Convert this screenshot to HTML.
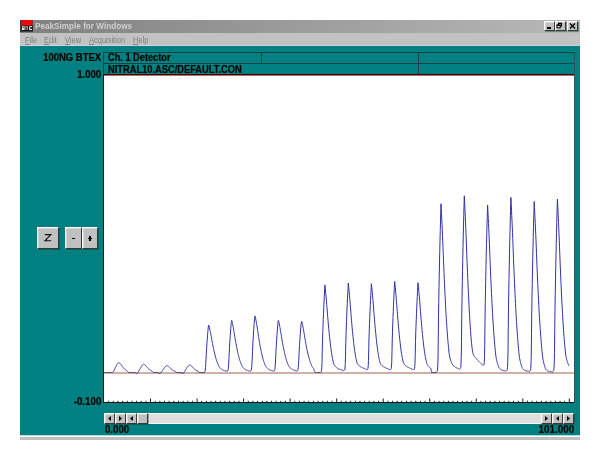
<!DOCTYPE html>
<html><head><meta charset="utf-8">
<style>
html,body{margin:0;padding:0;}
body{width:600px;height:460px;background:#fff;position:relative;overflow:hidden;font-family:"Liberation Sans",sans-serif;}
.abs{position:absolute;}
.t{position:absolute;-webkit-text-stroke:0.2px currentColor;font-weight:bold;font-size:10px;line-height:10px;color:#000;white-space:nowrap;}
.btn{position:absolute;background:#c0c0c0;box-sizing:border-box;border-top:1px solid #fff;border-left:1px solid #fff;border-bottom:1px solid #383838;border-right:1px solid #383838;box-shadow:1px 1px 0 rgba(0,40,40,0.35), inset 1px 1px 0 rgba(255,255,255,0.35);}
.m{position:absolute;top:35px;font-size:9px;line-height:10px;color:#808080;white-space:nowrap;transform:scaleX(0.83);transform-origin:0 0;}
.m u{text-decoration:underline;}
</style></head><body>
<!-- window -->
<div class="abs" style="left:20px;top:20px;width:560px;height:13px;background:linear-gradient(90deg,#808080 0%,#b8b8b8 100%);"></div>
<div class="abs" style="left:20px;top:33px;width:560px;height:13px;background:#c2c2c2;"></div>
<div class="abs" style="left:20px;top:45px;width:560px;height:1px;background:#c8d8d8;"></div>
<div class="abs" style="left:20px;top:46px;width:560px;height:389px;background:#008080;"></div>
<div class="abs" style="left:20px;top:435px;width:560px;height:1px;background:#b0dcdc;"></div>
<div class="abs" style="left:20px;top:437px;width:560px;height:3px;background:#c0c0c0;"></div>
<!-- icon -->
<svg class="abs" style="left:20px;top:20px;" width="13" height="13" viewBox="0 0 13 13">
<rect x="0" y="0" width="13" height="12" fill="#404040"/>
<rect x="1.3" y="0" width="11.2" height="5.6" fill="#f00808"/>
<rect x="1.3" y="5.6" width="11.4" height="5.4" fill="#181818"/>
<rect x="2" y="6.2" width="2.6" height="3.8" fill="#e8e8e8"/>
<rect x="5.4" y="6.2" width="2.6" height="3.8" fill="#b0b0b0"/>
<rect x="9.2" y="6.2" width="2.8" height="3.8" fill="#f0f0f0"/>
<rect x="10.2" y="7.2" width="1.8" height="1.8" fill="#181818"/>
<rect x="2.8" y="7" width="1" height="1" fill="#181818"/>
<rect x="6" y="7.4" width="1.2" height="2.6" fill="#303030"/>
</svg>
<div class="t" style="left:35px;top:21.3px;-webkit-text-stroke:0;color:#d0d0d0;font-size:9.5px;transform:scaleX(0.86);transform-origin:0 0;">PeakSimple for Windows</div>
<!-- title buttons -->
<div class="btn" style="left:544px;top:21px;width:11px;height:10px;"></div>
<div class="btn" style="left:555px;top:21px;width:11px;height:10px;"></div>
<div class="btn" style="left:567px;top:21px;width:11px;height:10px;"></div>
<div class="abs" style="left:547px;top:27px;width:4px;height:2px;background:#000;"></div>
<svg class="abs" style="left:555px;top:21px;" width="11" height="10" viewBox="0 0 11 10"><rect x="3.5" y="2.5" width="3" height="2.5" fill="none" stroke="#000" stroke-width="1"/><rect x="3" y="1.7" width="4" height="1" fill="#000"/><rect x="2" y="4.2" width="3.2" height="2.6" fill="#e8e8e8" stroke="#000" stroke-width="1"/><rect x="1.5" y="3.6" width="4.2" height="1" fill="#000"/></svg>
<svg class="abs" style="left:567px;top:21px;" width="11" height="10" viewBox="0 0 11 10"><path d="M3 2.5 L8 7.5 M8 2.5 L3 7.5" stroke="#000" stroke-width="1.3" fill="none"/></svg>
<!-- menu -->
<div class="m" style="left:25px;"><u>F</u>ile</div>
<div class="m" style="left:44px;"><u>E</u>dit</div>
<div class="m" style="left:65px;"><u>V</u>iew</div>
<div class="m" style="left:89px;"><u>A</u>cquisition</div>
<div class="m" style="left:133px;"><u>H</u>elp</div>
<!-- header box -->
<div class="abs" style="left:103px;top:52px;width:472px;height:23px;box-sizing:border-box;border:1px solid #104444;border-bottom:1px solid #400000;"></div>
<div class="abs" style="left:104px;top:63px;width:470px;height:1px;background:#104444;"></div>
<div class="abs" style="left:261px;top:53px;width:1px;height:10px;background:#104444;"></div>
<div class="abs" style="left:418px;top:53px;width:1px;height:21px;background:#104444;"></div>
<div class="t" style="left:107.5px;top:52.87px;transform:scaleX(0.922);transform-origin:0 0;">Ch. 1 Detector</div>
<div class="t" style="left:107.5px;top:64.9px;transform:scaleX(0.930);transform-origin:0 0;">NITRAL10.ASC/DEFAULT.CON</div>
<div class="t" style="right:498.7px;top:52.97px;transform:scaleX(0.948);transform-origin:100% 0;">100NG BTEX</div>
<div class="t" style="right:499px;top:70.0px;transform:scaleX(0.950);transform-origin:100% 0;">1.000</div>
<div class="t" style="right:499px;top:396.87px;transform:scaleX(0.977);transform-origin:100% 0;">-0.100</div>
<div class="t" style="left:104.7px;top:425.07px;transform:scaleX(0.966);transform-origin:0 0;">0.000</div>
<div class="t" style="right:26.2px;top:424.87px;transform:scaleX(0.984);transform-origin:100% 0;">101.000</div>
<!-- chart -->
<div class="abs" style="left:574px;top:53px;width:1px;height:350px;background:#285858;"></div>
<div class="abs" style="left:103px;top:75px;width:1px;height:328px;background:#002020;"></div>
<div class="abs" style="left:104px;top:75px;width:470px;height:327px;background:#fff;"></div>
<div class="abs" style="left:103px;top:402px;width:471px;height:1px;background:#201010;"></div>
<svg class="abs" style="left:104px;top:75px;" width="470" height="328" viewBox="0 0 470 328">
<line x1="4.65" y1="325.80" x2="4.65" y2="327" stroke="#381010" stroke-width="1"/><line x1="9.31" y1="325.80" x2="9.31" y2="327" stroke="#381010" stroke-width="1"/><line x1="13.96" y1="325.80" x2="13.96" y2="327" stroke="#381010" stroke-width="1"/><line x1="18.61" y1="325.80" x2="18.61" y2="327" stroke="#381010" stroke-width="1"/><line x1="23.27" y1="325.80" x2="23.27" y2="327" stroke="#381010" stroke-width="1"/><line x1="27.92" y1="325.80" x2="27.92" y2="327" stroke="#381010" stroke-width="1"/><line x1="32.57" y1="325.80" x2="32.57" y2="327" stroke="#381010" stroke-width="1"/><line x1="37.23" y1="325.80" x2="37.23" y2="327" stroke="#381010" stroke-width="1"/><line x1="41.88" y1="325.80" x2="41.88" y2="327" stroke="#381010" stroke-width="1"/><line x1="46.53" y1="323.50" x2="46.53" y2="327" stroke="#381010" stroke-width="1"/><line x1="51.19" y1="325.80" x2="51.19" y2="327" stroke="#381010" stroke-width="1"/><line x1="55.84" y1="325.80" x2="55.84" y2="327" stroke="#381010" stroke-width="1"/><line x1="60.50" y1="325.80" x2="60.50" y2="327" stroke="#381010" stroke-width="1"/><line x1="65.15" y1="325.80" x2="65.15" y2="327" stroke="#381010" stroke-width="1"/><line x1="69.80" y1="325.80" x2="69.80" y2="327" stroke="#381010" stroke-width="1"/><line x1="74.46" y1="325.80" x2="74.46" y2="327" stroke="#381010" stroke-width="1"/><line x1="79.11" y1="325.80" x2="79.11" y2="327" stroke="#381010" stroke-width="1"/><line x1="83.76" y1="325.80" x2="83.76" y2="327" stroke="#381010" stroke-width="1"/><line x1="88.42" y1="325.80" x2="88.42" y2="327" stroke="#381010" stroke-width="1"/><line x1="93.07" y1="323.50" x2="93.07" y2="327" stroke="#381010" stroke-width="1"/><line x1="97.72" y1="325.80" x2="97.72" y2="327" stroke="#381010" stroke-width="1"/><line x1="102.38" y1="325.80" x2="102.38" y2="327" stroke="#381010" stroke-width="1"/><line x1="107.03" y1="325.80" x2="107.03" y2="327" stroke="#381010" stroke-width="1"/><line x1="111.68" y1="325.80" x2="111.68" y2="327" stroke="#381010" stroke-width="1"/><line x1="116.34" y1="325.80" x2="116.34" y2="327" stroke="#381010" stroke-width="1"/><line x1="120.99" y1="325.80" x2="120.99" y2="327" stroke="#381010" stroke-width="1"/><line x1="125.64" y1="325.80" x2="125.64" y2="327" stroke="#381010" stroke-width="1"/><line x1="130.30" y1="325.80" x2="130.30" y2="327" stroke="#381010" stroke-width="1"/><line x1="134.95" y1="325.80" x2="134.95" y2="327" stroke="#381010" stroke-width="1"/><line x1="139.60" y1="323.50" x2="139.60" y2="327" stroke="#381010" stroke-width="1"/><line x1="144.26" y1="325.80" x2="144.26" y2="327" stroke="#381010" stroke-width="1"/><line x1="148.91" y1="325.80" x2="148.91" y2="327" stroke="#381010" stroke-width="1"/><line x1="153.57" y1="325.80" x2="153.57" y2="327" stroke="#381010" stroke-width="1"/><line x1="158.22" y1="325.80" x2="158.22" y2="327" stroke="#381010" stroke-width="1"/><line x1="162.87" y1="325.80" x2="162.87" y2="327" stroke="#381010" stroke-width="1"/><line x1="167.53" y1="325.80" x2="167.53" y2="327" stroke="#381010" stroke-width="1"/><line x1="172.18" y1="325.80" x2="172.18" y2="327" stroke="#381010" stroke-width="1"/><line x1="176.83" y1="325.80" x2="176.83" y2="327" stroke="#381010" stroke-width="1"/><line x1="181.49" y1="325.80" x2="181.49" y2="327" stroke="#381010" stroke-width="1"/><line x1="186.14" y1="323.50" x2="186.14" y2="327" stroke="#381010" stroke-width="1"/><line x1="190.79" y1="325.80" x2="190.79" y2="327" stroke="#381010" stroke-width="1"/><line x1="195.45" y1="325.80" x2="195.45" y2="327" stroke="#381010" stroke-width="1"/><line x1="200.10" y1="325.80" x2="200.10" y2="327" stroke="#381010" stroke-width="1"/><line x1="204.75" y1="325.80" x2="204.75" y2="327" stroke="#381010" stroke-width="1"/><line x1="209.41" y1="325.80" x2="209.41" y2="327" stroke="#381010" stroke-width="1"/><line x1="214.06" y1="325.80" x2="214.06" y2="327" stroke="#381010" stroke-width="1"/><line x1="218.71" y1="325.80" x2="218.71" y2="327" stroke="#381010" stroke-width="1"/><line x1="223.37" y1="325.80" x2="223.37" y2="327" stroke="#381010" stroke-width="1"/><line x1="228.02" y1="325.80" x2="228.02" y2="327" stroke="#381010" stroke-width="1"/><line x1="232.68" y1="323.50" x2="232.68" y2="327" stroke="#381010" stroke-width="1"/><line x1="237.33" y1="325.80" x2="237.33" y2="327" stroke="#381010" stroke-width="1"/><line x1="241.98" y1="325.80" x2="241.98" y2="327" stroke="#381010" stroke-width="1"/><line x1="246.64" y1="325.80" x2="246.64" y2="327" stroke="#381010" stroke-width="1"/><line x1="251.29" y1="325.80" x2="251.29" y2="327" stroke="#381010" stroke-width="1"/><line x1="255.94" y1="325.80" x2="255.94" y2="327" stroke="#381010" stroke-width="1"/><line x1="260.60" y1="325.80" x2="260.60" y2="327" stroke="#381010" stroke-width="1"/><line x1="265.25" y1="325.80" x2="265.25" y2="327" stroke="#381010" stroke-width="1"/><line x1="269.90" y1="325.80" x2="269.90" y2="327" stroke="#381010" stroke-width="1"/><line x1="274.56" y1="325.80" x2="274.56" y2="327" stroke="#381010" stroke-width="1"/><line x1="279.21" y1="323.50" x2="279.21" y2="327" stroke="#381010" stroke-width="1"/><line x1="283.86" y1="325.80" x2="283.86" y2="327" stroke="#381010" stroke-width="1"/><line x1="288.52" y1="325.80" x2="288.52" y2="327" stroke="#381010" stroke-width="1"/><line x1="293.17" y1="325.80" x2="293.17" y2="327" stroke="#381010" stroke-width="1"/><line x1="297.82" y1="325.80" x2="297.82" y2="327" stroke="#381010" stroke-width="1"/><line x1="302.48" y1="325.80" x2="302.48" y2="327" stroke="#381010" stroke-width="1"/><line x1="307.13" y1="325.80" x2="307.13" y2="327" stroke="#381010" stroke-width="1"/><line x1="311.78" y1="325.80" x2="311.78" y2="327" stroke="#381010" stroke-width="1"/><line x1="316.44" y1="325.80" x2="316.44" y2="327" stroke="#381010" stroke-width="1"/><line x1="321.09" y1="325.80" x2="321.09" y2="327" stroke="#381010" stroke-width="1"/><line x1="325.75" y1="323.50" x2="325.75" y2="327" stroke="#381010" stroke-width="1"/><line x1="330.40" y1="325.80" x2="330.40" y2="327" stroke="#381010" stroke-width="1"/><line x1="335.05" y1="325.80" x2="335.05" y2="327" stroke="#381010" stroke-width="1"/><line x1="339.71" y1="325.80" x2="339.71" y2="327" stroke="#381010" stroke-width="1"/><line x1="344.36" y1="325.80" x2="344.36" y2="327" stroke="#381010" stroke-width="1"/><line x1="349.01" y1="325.80" x2="349.01" y2="327" stroke="#381010" stroke-width="1"/><line x1="353.67" y1="325.80" x2="353.67" y2="327" stroke="#381010" stroke-width="1"/><line x1="358.32" y1="325.80" x2="358.32" y2="327" stroke="#381010" stroke-width="1"/><line x1="362.97" y1="325.80" x2="362.97" y2="327" stroke="#381010" stroke-width="1"/><line x1="367.63" y1="325.80" x2="367.63" y2="327" stroke="#381010" stroke-width="1"/><line x1="372.28" y1="323.50" x2="372.28" y2="327" stroke="#381010" stroke-width="1"/><line x1="376.93" y1="325.80" x2="376.93" y2="327" stroke="#381010" stroke-width="1"/><line x1="381.59" y1="325.80" x2="381.59" y2="327" stroke="#381010" stroke-width="1"/><line x1="386.24" y1="325.80" x2="386.24" y2="327" stroke="#381010" stroke-width="1"/><line x1="390.89" y1="325.80" x2="390.89" y2="327" stroke="#381010" stroke-width="1"/><line x1="395.55" y1="325.80" x2="395.55" y2="327" stroke="#381010" stroke-width="1"/><line x1="400.20" y1="325.80" x2="400.20" y2="327" stroke="#381010" stroke-width="1"/><line x1="404.85" y1="325.80" x2="404.85" y2="327" stroke="#381010" stroke-width="1"/><line x1="409.51" y1="325.80" x2="409.51" y2="327" stroke="#381010" stroke-width="1"/><line x1="414.16" y1="325.80" x2="414.16" y2="327" stroke="#381010" stroke-width="1"/><line x1="418.82" y1="323.50" x2="418.82" y2="327" stroke="#381010" stroke-width="1"/><line x1="423.47" y1="325.80" x2="423.47" y2="327" stroke="#381010" stroke-width="1"/><line x1="428.12" y1="325.80" x2="428.12" y2="327" stroke="#381010" stroke-width="1"/><line x1="432.78" y1="325.80" x2="432.78" y2="327" stroke="#381010" stroke-width="1"/><line x1="437.43" y1="325.80" x2="437.43" y2="327" stroke="#381010" stroke-width="1"/><line x1="442.08" y1="325.80" x2="442.08" y2="327" stroke="#381010" stroke-width="1"/><line x1="446.74" y1="325.80" x2="446.74" y2="327" stroke="#381010" stroke-width="1"/><line x1="451.39" y1="325.80" x2="451.39" y2="327" stroke="#381010" stroke-width="1"/><line x1="456.04" y1="325.80" x2="456.04" y2="327" stroke="#381010" stroke-width="1"/><line x1="460.70" y1="325.80" x2="460.70" y2="327" stroke="#381010" stroke-width="1"/><line x1="465.35" y1="323.50" x2="465.35" y2="327" stroke="#381010" stroke-width="1"/>
<line x1="0" y1="0.5" x2="470" y2="0.5" stroke="#b07070" stroke-width="1"/>
<rect x="0" y="297.2" width="470" height="1.6" fill="#c89c94"/>
<path d="M0.50 297.50 L0.75 297.50 L1.00 297.50 L1.25 297.50 L1.50 297.50 L1.75 297.50 L2.00 297.50 L2.25 297.50 L2.50 297.50 L2.75 297.50 L3.00 297.50 L3.25 297.50 L3.50 297.50 L3.75 297.50 L4.00 297.50 L4.25 297.50 L4.50 297.50 L4.75 297.50 L5.00 297.50 L5.25 297.50 L5.50 297.50 L5.75 297.50 L6.00 297.50 L6.25 297.50 L6.50 297.50 L6.75 297.50 L7.00 297.50 L7.25 297.50 L7.50 297.50 L7.75 297.50 L8.00 297.50 L8.25 297.50 L8.50 297.45 L8.75 297.30 L9.00 297.10 L9.25 296.85 L9.50 296.50 L9.75 296.08 L10.00 295.59 L10.25 295.06 L10.50 294.51 L10.75 293.95 L11.00 293.40 L11.25 292.89 L11.50 292.41 L11.75 291.92 L12.00 291.40 L12.25 290.88 L12.50 290.37 L12.75 289.88 L13.00 289.43 L13.25 289.03 L13.50 288.69 L13.75 288.44 L14.00 288.21 L14.25 287.99 L14.50 287.82 L14.75 287.72 L14.90 287.70 L15.00 287.71 L15.25 287.80 L15.50 287.97 L15.75 288.18 L16.00 288.40 L16.25 288.62 L16.50 288.87 L16.75 289.17 L17.00 289.49 L17.25 289.84 L17.50 290.21 L17.75 290.58 L18.00 290.96 L18.25 291.33 L18.50 291.70 L18.75 292.04 L19.00 292.37 L19.25 292.66 L19.50 292.93 L19.75 293.20 L20.00 293.47 L20.25 293.72 L20.50 293.97 L20.75 294.20 L21.00 294.43 L21.25 294.64 L21.50 294.83 L21.75 295.00 L22.00 295.15 L22.25 295.29 L22.50 295.44 L22.75 295.62 L23.00 295.83 L23.25 296.11 L23.50 296.43 L23.75 296.74 L24.00 297.02 L24.25 297.22 L24.50 297.39 L24.75 297.50 L25.00 297.50 L25.25 297.50 L25.50 297.50 L25.75 297.50 L26.00 297.50 L26.25 297.50 L26.50 297.50 L26.75 297.50 L27.00 297.50 L27.25 297.50 L27.50 297.50 L27.75 297.50 L28.00 297.50 L28.25 297.50 L28.50 297.50 L28.75 297.50 L29.00 297.50 L29.25 297.50 L29.50 297.50 L29.75 297.50 L30.00 297.50 L30.25 297.50 L30.50 297.50 L30.75 297.62 L31.00 297.75 L31.25 297.88 L31.50 298.00 L31.75 298.12 L32.00 298.25 L32.25 298.38 L32.50 298.50 L32.75 298.38 L33.00 298.25 L33.25 298.12 L33.50 297.91 L33.75 297.64 L34.00 297.34 L34.25 296.97 L34.50 296.52 L34.75 296.14 L35.00 295.71 L35.25 295.25 L35.50 294.78 L35.75 294.31 L36.00 293.85 L36.25 293.43 L36.50 293.03 L36.75 292.60 L37.00 292.16 L37.25 291.72 L37.50 291.29 L37.75 290.89 L38.00 290.52 L38.25 290.21 L38.50 289.95 L38.75 289.75 L39.00 289.55 L39.25 289.39 L39.50 289.26 L39.75 289.20 L39.80 289.20 L40.00 289.23 L40.25 289.34 L40.50 289.49 L40.75 289.68 L41.00 289.86 L41.25 290.06 L41.50 290.29 L41.75 290.55 L42.00 290.84 L42.25 291.14 L42.50 291.45 L42.75 291.77 L43.00 292.09 L43.25 292.40 L43.50 292.71 L43.75 292.99 L44.00 293.25 L44.25 293.49 L44.50 293.72 L44.75 293.95 L45.00 294.17 L45.25 294.39 L45.50 294.59 L45.75 294.79 L46.00 294.97 L46.25 295.14 L46.50 295.30 L46.75 295.43 L47.00 295.56 L47.25 295.68 L47.50 295.81 L47.75 295.97 L48.00 296.17 L48.25 296.43 L48.50 296.70 L48.75 296.96 L49.00 297.17 L49.25 297.33 L49.50 297.46 L49.75 297.50 L50.00 297.50 L50.25 297.50 L50.50 297.50 L50.75 297.50 L51.00 297.50 L51.25 297.50 L51.50 297.50 L51.75 297.50 L52.00 297.50 L52.25 297.50 L52.50 297.50 L52.75 297.50 L53.00 297.50 L53.25 297.50 L53.50 297.50 L53.75 297.62 L54.00 297.75 L54.25 297.88 L54.50 298.00 L54.75 298.12 L55.00 298.25 L55.25 298.38 L55.50 298.50 L55.75 298.38 L56.00 298.25 L56.25 298.12 L56.50 298.00 L56.75 297.78 L57.00 297.53 L57.25 297.25 L57.50 296.90 L57.75 296.63 L58.00 296.30 L58.25 295.94 L58.50 295.55 L58.75 295.16 L59.00 294.77 L59.25 294.39 L59.50 294.05 L59.75 293.71 L60.00 293.35 L60.25 292.99 L60.50 292.62 L60.75 292.27 L61.00 291.94 L61.25 291.64 L61.50 291.39 L61.75 291.19 L62.00 291.02 L62.25 290.86 L62.50 290.73 L62.75 290.64 L63.00 290.60 L63.25 290.64 L63.50 290.74 L63.75 290.87 L64.00 291.03 L64.25 291.18 L64.50 291.35 L64.75 291.55 L65.00 291.77 L65.25 292.01 L65.50 292.26 L65.75 292.52 L66.00 292.79 L66.25 293.05 L66.50 293.31 L66.75 293.56 L67.00 293.80 L67.25 294.01 L67.50 294.21 L67.75 294.40 L68.00 294.59 L68.25 294.77 L68.50 294.95 L68.75 295.11 L69.00 295.27 L69.25 295.43 L69.50 295.57 L69.75 295.69 L70.00 295.80 L70.25 295.90 L70.50 296.01 L70.75 296.12 L71.00 296.26 L71.25 296.44 L71.50 296.65 L71.75 296.88 L72.00 297.09 L72.25 297.25 L72.50 297.38 L72.75 297.48 L73.00 297.50 L73.25 297.50 L73.50 297.50 L73.75 297.50 L74.00 297.50 L74.25 297.50 L74.50 297.50 L74.75 297.50 L75.00 297.50 L75.25 297.50 L75.50 297.50 L75.75 297.50 L76.00 297.50 L76.25 297.50 L76.50 297.50 L76.75 297.52 L77.00 297.65 L77.25 297.77 L77.50 297.90 L77.75 298.02 L78.00 298.15 L78.25 298.27 L78.50 298.40 L78.75 298.48 L79.00 298.35 L79.25 298.23 L79.50 298.02 L79.75 297.77 L80.00 297.48 L80.25 297.13 L80.50 296.71 L80.75 296.27 L81.00 295.88 L81.25 295.47 L81.50 295.04 L81.75 294.62 L82.00 294.20 L82.25 293.82 L82.50 293.46 L82.75 293.07 L83.00 292.68 L83.25 292.28 L83.50 291.89 L83.75 291.53 L84.00 291.20 L84.25 290.91 L84.50 290.68 L84.75 290.49 L85.00 290.32 L85.25 290.17 L85.50 290.05 L85.75 290.00 L85.80 290.00 L86.00 290.03 L86.25 290.12 L86.50 290.27 L86.75 290.43 L87.00 290.60 L87.25 290.78 L87.50 290.99 L87.75 291.22 L88.00 291.48 L88.25 291.75 L88.50 292.03 L88.75 292.32 L89.00 292.61 L89.25 292.89 L89.50 293.17 L89.75 293.43 L90.00 293.66 L90.25 293.88 L90.50 294.09 L90.75 294.29 L91.00 294.49 L91.25 294.69 L91.50 294.87 L91.75 295.05 L92.00 295.21 L92.25 295.37 L92.50 295.51 L92.75 295.63 L93.00 295.74 L93.25 295.86 L93.50 295.98 L93.75 296.12 L94.00 296.30 L94.25 296.53 L94.50 296.78 L94.75 297.01 L95.00 297.20 L95.25 297.34 L95.50 297.46 L95.75 297.50 L96.00 297.50 L96.25 297.50 L96.50 297.50 L96.75 297.50 L97.00 297.50 L97.25 297.50 L97.50 297.50 L97.75 297.50 L98.00 297.50 L98.25 297.50 L98.50 297.50 L98.75 297.50 L99.00 297.50 L99.25 297.50 L99.50 297.50 L99.75 297.50 L100.00 297.46 L100.25 297.37 L100.50 297.27 L100.75 297.03 L101.00 296.45 L101.25 295.17 L101.50 292.49 L101.75 288.81 L102.00 284.47 L102.25 279.74 L102.50 275.02 L102.75 271.04 L103.00 267.45 L103.25 264.07 L103.50 260.88 L103.75 257.86 L104.00 255.03 L104.25 252.13 L104.50 250.95 L104.60 250.17 L104.75 250.42 L105.00 250.53 L105.25 251.73 L105.50 252.88 L105.75 254.05 L106.00 255.23 L106.25 256.43 L106.50 257.68 L106.75 258.97 L107.00 260.30 L107.25 261.68 L107.50 263.09 L107.75 264.50 L108.00 265.89 L108.25 267.25 L108.50 268.57 L108.75 269.85 L109.00 271.10 L109.25 272.31 L109.50 273.50 L109.75 274.65 L110.00 275.78 L110.25 276.88 L110.50 277.96 L110.75 279.01 L111.00 280.02 L111.25 280.99 L111.50 281.91 L111.75 282.81 L112.00 283.67 L112.25 284.50 L112.50 285.31 L112.75 286.08 L113.00 286.82 L113.25 287.51 L113.50 288.17 L113.75 288.79 L114.00 289.39 L114.25 289.96 L114.50 290.50 L114.75 291.02 L115.00 291.50 L115.25 291.92 L115.50 292.29 L115.75 292.61 L116.00 292.88 L116.25 293.12 L116.50 293.34 L116.75 293.55 L117.00 293.77 L117.25 293.98 L117.50 294.19 L117.75 294.38 L118.00 294.56 L118.25 294.72 L118.50 294.86 L118.75 294.98 L119.00 295.09 L119.25 295.19 L119.50 295.28 L119.75 295.37 L120.00 295.45 L120.25 295.53 L120.50 295.60 L120.75 295.68 L121.00 295.75 L121.25 295.82 L121.50 295.89 L121.75 295.96 L122.00 296.02 L122.25 296.09 L122.50 296.14 L122.75 296.17 L123.00 296.17 L123.25 296.15 L123.50 296.08 L123.75 295.85 L124.00 295.26 L124.25 293.90 L124.50 291.03 L124.75 287.08 L125.00 282.40 L125.25 277.29 L125.50 272.20 L125.75 267.91 L126.00 264.05 L126.25 260.42 L126.50 256.98 L126.75 253.74 L127.00 250.70 L127.25 247.58 L127.50 246.32 L127.60 245.48 L127.75 245.78 L128.00 245.92 L128.25 247.26 L128.50 248.53 L128.75 249.82 L129.00 251.13 L129.25 252.47 L129.50 253.84 L129.75 255.27 L130.00 256.74 L130.25 258.26 L130.50 259.82 L130.75 261.38 L131.00 262.91 L131.25 264.41 L131.50 265.87 L131.75 267.28 L132.00 268.66 L132.25 269.99 L132.50 271.30 L132.75 272.57 L133.00 273.82 L133.25 275.03 L133.50 276.22 L133.75 277.37 L134.00 278.48 L134.25 279.55 L134.50 280.57 L134.75 281.54 L135.00 282.48 L135.25 283.39 L135.50 284.26 L135.75 285.10 L136.00 285.90 L136.25 286.65 L136.50 287.37 L136.75 288.04 L137.00 288.69 L137.25 289.31 L137.50 289.90 L137.75 290.46 L138.00 290.98 L138.25 291.44 L138.50 291.85 L138.75 292.19 L139.00 292.48 L139.25 292.74 L139.50 292.98 L139.75 293.22 L140.00 293.45 L140.25 293.68 L140.50 293.91 L140.75 294.11 L141.00 294.31 L141.25 294.48 L141.50 294.63 L141.75 294.76 L142.00 294.88 L142.25 294.99 L142.50 295.09 L142.75 295.19 L143.00 295.28 L143.25 295.36 L143.50 295.44 L143.75 295.52 L144.00 295.60 L144.25 295.67 L144.50 295.75 L144.75 295.82 L145.00 295.90 L145.25 295.97 L145.50 296.03 L145.75 296.08 L146.00 296.11 L146.25 296.12 L146.50 296.09 L146.75 296.02 L147.00 295.83 L147.25 295.28 L147.50 294.07 L147.75 291.28 L148.00 287.18 L148.25 282.22 L148.50 276.75 L148.75 271.11 L149.00 266.27 L149.25 262.01 L149.50 258.02 L149.75 254.24 L150.00 250.67 L150.25 247.32 L150.50 243.66 L150.75 242.13 L150.90 241.14 L151.00 241.39 L151.25 241.39 L151.50 242.66 L151.75 244.04 L152.00 245.44 L152.25 246.86 L152.50 248.30 L152.75 249.79 L153.00 251.32 L153.25 252.92 L153.50 254.56 L153.75 256.24 L154.00 257.94 L154.25 259.61 L154.50 261.25 L154.75 262.84 L155.00 264.39 L155.25 265.89 L155.50 267.35 L155.75 268.77 L156.00 270.16 L156.25 271.52 L156.50 272.85 L156.75 274.14 L157.00 275.40 L157.25 276.61 L157.50 277.78 L157.75 278.89 L158.00 279.96 L158.25 280.98 L158.50 281.97 L158.75 282.93 L159.00 283.85 L159.25 284.72 L159.50 285.55 L159.75 286.34 L160.00 287.08 L160.25 287.79 L160.50 288.47 L160.75 289.12 L161.00 289.74 L161.25 290.31 L161.50 290.82 L161.75 291.27 L162.00 291.66 L162.25 291.99 L162.50 292.27 L162.75 292.54 L163.00 292.79 L163.25 293.05 L163.50 293.30 L163.75 293.55 L164.00 293.78 L164.25 293.99 L164.50 294.18 L164.75 294.35 L165.00 294.50 L165.25 294.63 L165.50 294.75 L165.75 294.86 L166.00 294.97 L166.25 295.06 L166.50 295.16 L166.75 295.25 L167.00 295.33 L167.25 295.42 L167.50 295.50 L167.75 295.58 L168.00 295.66 L168.25 295.74 L168.50 295.82 L168.75 295.89 L169.00 295.95 L169.25 296.00 L169.50 296.02 L169.75 296.02 L170.00 295.99 L170.25 295.92 L170.50 295.64 L170.75 294.96 L171.00 293.33 L171.25 290.20 L171.50 286.08 L171.75 281.30 L172.00 276.15 L172.25 271.20 L172.50 267.06 L172.75 263.25 L173.00 259.67 L173.25 256.28 L173.50 253.09 L173.75 250.10 L174.00 247.23 L174.25 246.13 L174.30 245.37 L174.50 245.73 L174.75 246.00 L175.00 247.52 L175.25 248.80 L175.50 250.09 L175.75 251.41 L176.00 252.75 L176.25 254.14 L176.50 255.58 L176.75 257.07 L177.00 258.60 L177.25 260.16 L177.50 261.72 L177.75 263.25 L178.00 264.74 L178.25 266.19 L178.50 267.60 L178.75 268.97 L179.00 270.30 L179.25 271.60 L179.50 272.87 L179.75 274.11 L180.00 275.31 L180.25 276.49 L180.50 277.64 L180.75 278.73 L181.00 279.78 L181.25 280.79 L181.50 281.75 L181.75 282.68 L182.00 283.58 L182.25 284.44 L182.50 285.27 L182.75 286.06 L183.00 286.79 L183.25 287.49 L183.50 288.15 L183.75 288.78 L184.00 289.39 L184.25 289.96 L184.50 290.50 L184.75 290.99 L185.00 291.43 L185.25 291.81 L185.50 292.13 L185.75 292.40 L186.00 292.63 L186.25 292.86 L186.50 293.07 L186.75 293.28 L187.00 293.49 L187.25 293.69 L187.50 293.88 L187.75 294.05 L188.00 294.21 L188.25 294.35 L188.50 294.48 L188.75 294.60 L189.00 294.71 L189.25 294.81 L189.50 294.91 L189.75 295.00 L190.00 295.09 L190.25 295.18 L190.50 295.26 L190.75 295.35 L191.00 295.43 L191.25 295.52 L191.50 295.60 L191.75 295.69 L192.00 295.76 L192.25 295.83 L192.50 295.88 L192.75 295.91 L193.00 295.91 L193.25 295.87 L193.50 295.78 L193.75 295.44 L194.00 294.68 L194.25 292.77 L194.50 289.45 L194.75 285.22 L195.00 280.40 L195.25 275.25 L195.50 270.52 L195.75 266.52 L196.00 262.81 L196.25 259.31 L196.50 255.99 L196.75 252.88 L197.00 249.95 L197.25 247.94 L197.50 246.81 L197.75 246.50 L198.00 246.98 L198.25 248.24 L198.50 249.51 L198.75 250.80 L199.00 252.11 L199.25 253.45 L199.50 254.83 L199.75 256.27 L200.00 257.75 L200.25 259.28 L200.50 260.83 L200.75 262.37 L201.00 263.88 L201.25 265.35 L201.50 266.78 L201.75 268.16 L202.00 269.51 L202.25 270.83 L202.50 272.11 L202.75 273.36 L203.00 274.58 L203.25 275.77 L203.50 276.94 L203.75 278.06 L204.00 279.14 L204.25 280.17 L204.50 281.16 L204.75 282.11 L205.00 283.02 L205.25 283.90 L205.50 284.76 L205.75 285.58 L206.00 286.35 L206.25 287.09 L206.50 287.79 L206.75 288.47 L207.00 289.11 L207.25 289.73 L207.50 290.32 L207.75 290.88 L208.00 291.39 L208.25 291.84 L208.50 292.23 L208.75 292.57 L209.00 292.86 L209.25 293.13 L209.50 293.53 L209.75 294.09 L210.00 294.78 L210.25 295.58 L210.50 296.35 L210.75 296.92 L211.00 297.29 L211.25 297.47 L211.50 297.50 L211.75 297.50 L212.00 297.50 L212.25 297.50 L212.50 297.50 L212.75 297.50 L213.00 297.50 L213.25 297.50 L213.50 297.50 L213.75 297.50 L214.00 297.50 L214.25 297.50 L214.50 297.50 L214.75 297.50 L215.00 297.50 L215.25 297.50 L215.50 297.50 L215.75 297.50 L216.00 297.50 L216.25 297.45 L216.50 297.35 L216.75 297.19 L217.00 296.98 L217.25 296.69 L217.50 295.67 L217.75 292.84 L218.00 287.69 L218.25 275.37 L218.50 265.20 L218.75 257.58 L219.00 250.81 L219.25 244.45 L219.50 238.25 L219.75 232.40 L220.00 226.90 L220.25 221.76 L220.50 216.99 L220.75 212.47 L220.90 209.90 L221.00 210.89 L221.25 213.41 L221.50 215.99 L221.75 218.58 L222.00 221.21 L222.25 223.90 L222.50 226.69 L222.75 229.63 L223.00 232.76 L223.25 235.98 L223.50 239.21 L223.75 242.34 L224.00 245.30 L224.25 248.16 L224.50 250.94 L224.75 253.64 L225.00 256.24 L225.25 258.76 L225.50 261.24 L225.75 263.65 L226.00 265.95 L226.25 268.14 L226.50 270.17 L226.75 272.13 L227.00 274.02 L227.25 275.84 L227.50 277.57 L227.75 279.19 L228.00 280.69 L228.25 282.06 L228.50 283.39 L228.75 284.68 L229.00 285.89 L229.25 286.99 L229.50 287.95 L229.75 288.73 L230.00 289.32 L230.25 289.82 L230.50 290.25 L230.75 290.62 L231.00 290.96 L231.25 291.27 L231.50 291.57 L231.75 291.86 L232.00 292.13 L232.25 292.38 L232.50 292.60 L232.75 292.81 L233.00 292.99 L233.25 293.16 L233.50 293.31 L233.75 293.46 L234.00 293.59 L234.25 293.71 L234.50 293.82 L234.75 293.93 L235.00 294.03 L235.25 294.12 L235.50 294.22 L235.75 294.31 L236.00 294.40 L236.25 294.48 L236.50 294.57 L236.75 294.65 L237.00 294.73 L237.25 294.81 L237.50 294.88 L237.75 294.96 L238.00 295.03 L238.25 295.11 L238.50 295.18 L238.75 295.26 L239.00 295.33 L239.25 295.40 L239.50 295.45 L239.75 295.44 L240.00 295.38 L240.25 295.26 L240.50 295.08 L240.75 294.78 L241.00 293.03 L241.25 289.65 L241.50 281.55 L241.75 268.77 L242.00 260.20 L242.25 252.95 L242.50 246.39 L242.75 240.06 L243.00 233.99 L243.25 228.27 L243.50 222.90 L243.75 217.92 L244.00 213.26 L244.25 208.85 L244.30 208.00 L244.50 210.05 L244.75 212.66 L245.00 215.32 L245.25 218.00 L245.50 220.72 L245.75 223.52 L246.00 226.43 L246.25 229.52 L246.50 232.78 L246.75 236.09 L247.00 239.37 L247.25 242.51 L247.50 245.49 L247.75 248.39 L248.00 251.20 L248.25 253.93 L248.50 256.55 L248.75 259.12 L249.00 261.63 L249.25 264.06 L249.50 266.37 L249.75 268.55 L250.00 270.59 L250.25 272.57 L250.50 274.48 L250.75 276.30 L251.00 278.00 L251.25 279.55 L251.50 280.98 L251.75 282.28 L252.00 283.55 L252.25 284.77 L252.50 285.88 L252.75 286.88 L253.00 287.71 L253.25 288.36 L253.50 288.84 L253.75 289.24 L254.00 289.57 L254.25 289.85 L254.50 290.10 L254.75 290.34 L255.00 290.57 L255.25 290.79 L255.50 290.99 L255.75 291.17 L256.00 291.35 L256.25 291.51 L256.50 291.69 L256.75 291.85 L257.00 292.01 L257.25 292.15 L257.50 292.29 L257.75 292.42 L258.00 292.55 L258.25 292.67 L258.50 292.78 L258.75 292.89 L259.00 293.00 L259.25 293.12 L259.50 293.23 L259.75 293.34 L260.00 293.45 L260.25 293.56 L260.50 293.66 L260.75 293.77 L261.00 293.88 L261.25 293.99 L261.50 294.09 L261.75 294.20 L262.00 294.30 L262.25 294.40 L262.50 294.49 L262.75 294.54 L263.00 294.53 L263.25 294.46 L263.50 294.33 L263.75 294.13 L264.00 293.20 L264.25 290.46 L264.50 285.42 L264.75 273.21 L265.00 263.15 L265.25 255.62 L265.50 248.95 L265.75 242.68 L266.00 236.57 L266.25 230.82 L266.50 225.40 L266.75 220.34 L267.00 215.67 L267.25 211.23 L267.40 208.70 L267.50 209.72 L267.75 212.29 L268.00 214.92 L268.25 217.57 L268.50 220.25 L268.75 223.00 L269.00 225.84 L269.25 228.84 L269.50 232.02 L269.75 235.29 L270.00 238.57 L270.25 241.76 L270.50 244.77 L270.75 247.68 L271.00 250.52 L271.25 253.27 L271.50 255.92 L271.75 258.48 L272.00 261.00 L272.25 263.45 L272.50 265.80 L272.75 268.02 L273.00 270.09 L273.25 272.08 L273.50 274.00 L273.75 275.85 L274.00 277.58 L274.25 279.19 L274.50 280.65 L274.75 281.97 L275.00 283.24 L275.25 284.47 L275.50 285.61 L275.75 286.64 L276.00 287.53 L276.25 288.25 L276.50 288.78 L276.75 289.20 L277.00 289.55 L277.25 289.84 L277.50 290.10 L277.75 290.34 L278.00 290.58 L278.25 290.80 L278.50 291.00 L278.75 291.19 L279.00 291.36 L279.25 291.53 L279.50 291.70 L279.75 291.86 L280.00 292.02 L280.25 292.17 L280.50 292.31 L280.75 292.44 L281.00 292.56 L281.25 292.68 L281.50 292.80 L281.75 292.91 L282.00 293.02 L282.25 293.13 L282.50 293.24 L282.75 293.35 L283.00 293.46 L283.25 293.57 L283.50 293.67 L283.75 293.78 L284.00 293.89 L284.25 293.99 L284.50 294.10 L284.75 294.20 L285.00 294.30 L285.25 294.40 L285.50 294.50 L285.75 294.59 L286.00 294.64 L286.25 294.64 L286.50 294.58 L286.75 294.46 L287.00 294.26 L287.25 293.61 L287.50 291.13 L287.75 286.94 L288.00 275.42 L288.25 264.09 L288.50 256.14 L288.75 249.15 L289.00 242.67 L289.25 236.35 L289.50 230.36 L289.75 224.74 L290.00 219.46 L290.25 214.59 L290.50 209.98 L290.70 206.50 L290.75 207.02 L291.00 209.65 L291.25 212.33 L291.50 215.05 L291.75 217.79 L292.00 220.58 L292.25 223.47 L292.50 226.51 L292.75 229.74 L293.00 233.08 L293.25 236.45 L293.50 239.75 L293.75 242.87 L294.00 245.87 L294.25 248.79 L294.50 251.62 L294.75 254.36 L295.00 257.00 L295.25 259.59 L295.50 262.12 L295.75 264.55 L296.00 266.85 L296.25 269.00 L296.50 271.05 L296.75 273.03 L297.00 274.94 L297.25 276.74 L297.50 278.40 L297.75 279.93 L298.00 281.31 L298.25 282.62 L298.50 283.88 L298.75 285.08 L299.00 286.16 L299.25 287.11 L299.50 287.88 L299.75 288.45 L300.00 288.91 L300.25 289.28 L300.50 289.59 L300.75 289.85 L301.00 290.10 L301.25 290.35 L301.50 290.58 L301.75 290.79 L302.00 290.98 L302.25 291.17 L302.50 291.34 L302.75 291.51 L303.00 291.68 L303.25 291.85 L303.50 292.00 L303.75 292.14 L304.00 292.28 L304.25 292.41 L304.50 292.53 L304.75 292.65 L305.00 292.77 L305.25 292.88 L305.50 292.99 L305.75 293.11 L306.00 293.22 L306.25 293.33 L306.50 293.44 L306.75 293.55 L307.00 293.66 L307.25 293.77 L307.50 293.88 L307.75 293.99 L308.00 294.09 L308.25 294.20 L308.50 294.30 L308.75 294.40 L309.00 294.50 L309.25 294.56 L309.50 294.58 L309.75 294.53 L310.00 294.42 L310.25 294.25 L310.50 293.83 L310.75 291.74 L311.00 288.13 L311.25 278.31 L311.50 266.19 L311.75 258.10 L312.00 251.06 L312.25 244.61 L312.50 238.34 L312.75 232.37 L313.00 226.76 L313.25 221.48 L313.50 216.61 L313.75 212.02 L314.00 207.70 L314.25 210.29 L314.50 212.92 L314.75 215.60 L315.00 218.30 L315.25 221.04 L315.50 223.88 L315.75 226.83 L316.00 229.98 L316.25 233.27 L316.50 236.60 L316.75 239.88 L317.00 243.00 L317.25 245.97 L317.50 248.87 L317.75 251.68 L318.00 254.41 L318.25 257.03 L318.50 259.60 L318.75 262.10 L319.00 264.52 L319.25 266.82 L319.50 268.97 L319.75 271.01 L320.00 272.98 L320.25 274.88 L320.50 276.68 L320.75 278.37 L321.00 279.93 L321.25 281.36 L321.50 282.69 L321.75 284.00 L322.00 285.25 L322.25 286.39 L322.50 287.41 L322.75 288.26 L323.00 288.91 L323.25 289.44 L323.50 289.88 L323.75 290.26 L324.00 290.60 L324.25 290.90 L324.50 291.20 L324.75 291.48 L325.00 291.75 L325.25 291.99 L325.50 292.22 L325.75 292.43 L326.00 292.61 L326.25 292.79 L326.50 292.95 L326.75 293.32 L327.00 294.52 L327.25 295.64 L327.50 296.70 L327.75 297.50 L328.00 297.50 L328.25 297.50 L328.50 297.50 L328.75 297.50 L329.00 297.50 L329.25 297.50 L329.50 297.50 L329.75 297.50 L330.00 297.50 L330.25 297.50 L330.50 297.50 L330.75 297.50 L331.00 297.50 L331.25 297.50 L331.50 297.50 L331.75 297.50 L332.00 297.50 L332.25 297.45 L332.50 297.30 L332.75 297.05 L333.00 296.67 L333.25 296.17 L333.50 295.21 L333.75 291.06 L334.00 284.00 L334.25 265.10 L334.50 241.83 L334.75 226.24 L335.00 212.65 L335.25 200.20 L335.50 188.09 L335.75 176.56 L336.00 165.70 L336.25 155.49 L336.50 146.06 L336.75 137.18 L337.00 128.80 L337.25 133.80 L337.50 138.92 L337.75 144.11 L338.00 149.35 L338.25 154.71 L338.50 160.25 L338.75 166.09 L339.00 172.32 L339.25 178.78 L339.50 185.24 L339.75 191.51 L340.00 197.42 L340.25 203.13 L340.50 208.69 L340.75 214.06 L341.00 219.22 L341.25 224.25 L341.50 229.17 L341.75 233.93 L342.00 238.46 L342.25 242.71 L342.50 246.69 L342.75 250.56 L343.00 254.27 L343.25 257.82 L343.50 261.16 L343.75 264.28 L344.00 267.13 L344.25 269.85 L344.50 272.49 L344.75 275.00 L345.00 277.30 L345.25 279.30 L345.50 280.94 L345.75 282.19 L346.00 283.24 L346.25 284.16 L346.50 284.97 L346.75 285.69 L347.00 286.37 L347.25 287.01 L347.50 287.63 L347.75 288.21 L348.00 288.74 L348.25 289.22 L348.50 289.63 L348.75 289.97 L349.00 290.27 L349.25 290.54 L349.50 290.78 L349.75 291.01 L350.00 291.22 L350.25 291.41 L350.50 291.60 L350.75 291.77 L351.00 291.93 L351.25 292.09 L351.50 292.24 L351.75 292.39 L352.00 292.53 L352.25 292.66 L352.50 292.78 L352.75 292.91 L353.00 293.03 L353.25 293.14 L353.50 293.25 L353.75 293.37 L354.00 293.48 L354.25 293.59 L354.50 293.70 L354.75 293.81 L355.00 293.92 L355.25 294.03 L355.50 294.11 L355.75 294.08 L356.00 293.94 L356.25 293.68 L356.50 293.30 L356.75 292.68 L357.00 289.21 L357.25 282.49 L357.50 266.46 L357.75 241.16 L358.00 224.20 L358.25 209.84 L358.50 196.84 L358.75 184.31 L359.00 172.28 L359.25 160.96 L359.50 150.31 L359.75 140.44 L360.00 131.21 L360.25 122.48 L360.30 120.80 L360.50 125.01 L360.75 130.37 L361.00 135.83 L361.25 141.32 L361.50 146.92 L361.75 152.70 L362.00 158.74 L362.25 165.21 L362.50 171.95 L362.75 178.73 L363.00 185.37 L363.25 191.64 L363.50 197.66 L363.75 203.52 L364.00 209.19 L364.25 214.66 L364.50 219.95 L364.75 225.14 L365.00 230.17 L365.25 234.98 L365.50 239.50 L365.75 243.72 L366.00 247.81 L366.25 251.74 L366.50 255.48 L366.75 258.94 L367.00 262.10 L367.25 264.91 L367.50 267.47 L367.75 269.95 L368.00 272.28 L368.25 274.38 L368.50 276.20 L368.75 277.66 L369.00 278.71 L369.25 279.48 L369.50 280.06 L369.75 280.51 L370.00 280.88 L370.25 281.24 L370.50 281.60 L370.75 281.92 L371.00 282.20 L371.25 282.47 L371.50 282.73 L371.75 283.01 L372.00 283.31 L372.25 283.63 L372.50 283.94 L372.75 284.24 L373.00 284.52 L373.25 284.79 L373.50 285.05 L373.75 285.31 L374.00 285.55 L374.25 285.79 L374.50 286.02 L374.75 286.26 L375.00 286.50 L375.25 286.75 L375.50 287.00 L375.75 287.25 L376.00 287.50 L376.25 287.75 L376.50 288.00 L376.75 288.24 L377.00 288.49 L377.25 288.73 L377.50 288.98 L377.75 289.21 L378.00 289.44 L378.25 289.67 L378.50 289.90 L378.75 290.11 L379.00 290.24 L379.25 290.25 L379.50 290.16 L379.75 289.95 L380.00 289.60 L380.25 287.21 L380.50 281.56 L380.75 269.65 L381.00 245.92 L381.25 228.79 L381.50 215.10 L381.75 202.85 L382.00 191.18 L382.25 179.88 L382.50 169.25 L382.75 159.26 L383.00 149.96 L383.25 141.32 L383.50 133.13 L383.60 130.00 L383.75 133.01 L384.00 138.09 L384.25 143.27 L384.50 148.49 L384.75 153.80 L385.00 159.27 L385.25 164.96 L385.50 171.04 L385.75 177.41 L386.00 183.87 L386.25 190.23 L386.50 196.27 L386.75 202.04 L387.00 207.65 L387.25 213.09 L387.50 218.34 L387.75 223.40 L388.00 228.37 L388.25 233.19 L388.50 237.81 L388.75 242.16 L389.00 246.22 L389.25 250.11 L389.50 253.87 L389.75 257.46 L390.00 260.90 L390.25 264.13 L390.50 267.12 L390.75 269.90 L391.00 272.64 L391.25 275.29 L391.50 277.76 L391.75 279.98 L392.00 281.88 L392.25 283.37 L392.50 284.62 L392.75 285.75 L393.00 286.77 L393.25 287.69 L393.50 288.53 L393.75 289.31 L394.00 290.08 L394.25 290.81 L394.50 291.49 L394.75 292.10 L395.00 292.61 L395.25 293.01 L395.50 293.31 L395.75 293.57 L396.00 293.80 L396.25 294.01 L396.50 294.20 L396.75 294.37 L397.00 294.52 L397.25 294.66 L397.50 294.79 L397.75 294.92 L398.00 295.03 L398.25 295.13 L398.50 295.22 L398.75 295.30 L399.00 295.37 L399.25 295.44 L399.50 295.50 L399.75 295.55 L400.00 295.60 L400.25 295.65 L400.50 295.70 L400.75 295.75 L401.00 295.80 L401.25 295.85 L401.50 295.90 L401.75 295.96 L402.00 296.00 L402.25 295.96 L402.50 295.81 L402.75 295.55 L403.00 295.16 L403.25 294.63 L403.50 292.64 L403.75 287.05 L404.00 276.85 L404.25 252.34 L404.50 232.13 L404.75 216.99 L405.00 203.56 L405.25 190.94 L405.50 178.63 L405.75 167.03 L406.00 156.11 L406.25 145.91 L406.50 136.47 L406.75 127.51 L406.90 122.40 L407.00 124.47 L407.25 129.73 L407.50 135.10 L407.75 140.51 L408.00 146.00 L408.25 151.63 L408.50 157.49 L408.75 163.72 L409.00 170.30 L409.25 177.02 L409.50 183.67 L409.75 190.04 L410.00 196.06 L410.25 201.92 L410.50 207.60 L410.75 213.09 L411.00 218.37 L411.25 223.55 L411.50 228.60 L411.75 233.46 L412.00 238.05 L412.25 242.34 L412.50 246.43 L412.75 250.40 L413.00 254.21 L413.25 257.87 L413.50 261.35 L413.75 264.61 L414.00 267.62 L414.25 270.58 L414.50 273.47 L414.75 276.18 L415.00 278.65 L415.25 280.78 L415.50 282.49 L415.75 283.90 L416.00 285.17 L416.25 286.33 L416.50 287.37 L416.75 288.33 L417.00 289.21 L417.25 290.07 L417.50 290.90 L417.75 291.68 L418.00 292.38 L418.25 292.97 L418.50 293.43 L418.75 293.76 L419.00 294.05 L419.25 294.30 L419.50 294.52 L419.75 294.72 L420.00 294.89 L420.25 295.05 L420.50 295.19 L420.75 295.33 L421.00 295.46 L421.25 295.57 L421.50 295.67 L421.75 295.76 L422.00 295.83 L422.25 295.89 L422.50 295.95 L422.75 296.00 L423.00 296.04 L423.25 296.08 L423.50 296.11 L423.75 296.15 L424.00 296.18 L424.25 296.22 L424.50 296.26 L424.75 296.31 L425.00 296.35 L425.25 296.39 L425.50 296.36 L425.75 296.23 L426.00 295.98 L426.25 295.61 L426.50 295.12 L426.75 293.74 L427.00 288.90 L427.25 280.81 L427.50 258.76 L427.75 237.09 L428.00 221.84 L428.25 208.43 L428.50 196.00 L428.75 183.87 L429.00 172.38 L429.25 161.57 L429.50 151.43 L429.75 142.07 L430.00 133.20 L430.20 126.50 L430.25 127.51 L430.50 132.62 L430.75 137.84 L431.00 143.12 L431.25 148.46 L431.50 153.92 L431.75 159.59 L432.00 165.58 L432.25 171.96 L432.50 178.51 L432.75 185.03 L433.00 191.31 L433.25 197.24 L433.50 202.99 L433.75 208.57 L434.00 213.97 L434.25 219.16 L434.50 224.23 L434.75 229.19 L435.00 233.97 L435.25 238.52 L435.50 242.76 L435.75 246.78 L436.00 250.69 L436.25 254.44 L436.50 258.06 L436.75 261.52 L437.00 264.77 L437.25 267.78 L437.50 270.72 L437.75 273.59 L438.00 276.33 L438.25 278.83 L438.50 281.03 L438.75 282.83 L439.00 284.28 L439.25 285.59 L439.50 286.79 L439.75 287.89 L440.00 288.89 L440.25 289.80 L440.50 290.68 L440.75 291.54 L441.00 292.35 L441.25 293.08 L441.50 293.71 L441.75 294.21 L442.00 294.55 L442.25 294.84 L442.50 295.09 L442.75 295.30 L443.00 295.49 L443.25 295.66 L443.50 295.81 L443.75 295.95 L444.00 296.07 L444.25 296.19 L444.50 296.30 L444.75 296.39 L445.00 296.46 L445.25 296.53 L445.50 296.58 L445.75 296.62 L446.00 296.65 L446.25 296.68 L446.50 296.70 L446.75 296.72 L447.00 296.74 L447.25 296.75 L447.50 296.77 L447.75 296.80 L448.00 296.83 L448.25 296.86 L448.50 296.88 L448.75 296.81 L449.00 296.64 L449.25 296.35 L449.50 295.94 L449.75 295.39 L450.00 293.39 L450.25 287.82 L450.50 277.67 L450.75 253.33 L451.00 233.26 L451.25 218.22 L451.50 204.87 L451.75 192.32 L452.00 180.09 L452.25 168.56 L452.50 157.72 L452.75 147.57 L453.00 138.19 L453.25 129.28 L453.40 124.20 L453.50 126.25 L453.75 131.44 L454.00 136.76 L454.25 142.11 L454.50 147.54 L454.75 153.11 L455.00 158.90 L455.25 165.06 L455.50 171.57 L455.75 178.22 L456.00 184.79 L456.25 191.09 L456.50 197.04 L456.75 202.83 L457.00 208.45 L457.25 213.88 L457.50 219.10 L457.75 224.22 L458.00 229.21 L458.25 234.01 L458.50 238.56 L458.75 242.79 L459.00 246.84 L459.25 250.77 L459.50 254.54 L459.75 258.13 L460.00 261.53 L460.25 264.68 L460.50 267.56 L460.75 270.37 L461.00 273.10 L461.25 275.64 L461.50 277.94 L461.75 279.91 L462.00 281.47 L462.25 282.71 L462.50 283.80 L462.75 284.76 L463.00 285.61 L463.25 286.39 L463.50 287.12 L463.75 287.83 L464.00 288.50 L464.25 289.13 L464.50 289.70 L464.75 290.20 L465.00 290.61 L465.25 290.94" fill="none" stroke="#3030a4" stroke-width="1" stroke-linejoin="round" style="mix-blend-mode:multiply"/>
</svg>
<!-- Z - + buttons -->
<div class="btn" style="left:37px;top:227px;width:22px;height:22px;"></div>
<div class="btn" style="left:65px;top:227px;width:17px;height:22px;"></div>
<div class="btn" style="left:82px;top:227px;width:16px;height:22px;"></div>
<svg class="abs" style="left:37px;top:227px;" width="22" height="22" viewBox="0 0 22 22"><path d="M7.9 7.6 L13.9 7.6 L7.9 13.8 L14.2 13.8" fill="none" stroke="#101010" stroke-width="1.1"/></svg>
<div class="abs" style="left:72px;top:238px;width:3px;height:1px;background:#000;"></div>
<div class="abs" style="left:88px;top:238px;width:4px;height:1px;background:#000;"></div>
<div class="abs" style="left:89px;top:236px;width:2px;height:5px;background:#000;"></div>
<!-- scrollbar -->
<div class="abs" style="left:104px;top:413px;width:470px;height:11px;background:linear-gradient(#f6fcfc 0px,#f6fcfc 1px,#dedede 1px,#dedede 10px,#f6fcfc 10px);"></div>
<div class="btn" style="left:104px;top:413px;width:11px;height:11px;"></div>
<div class="btn" style="left:115px;top:413px;width:11px;height:11px;"></div>
<div class="btn" style="left:126px;top:413px;width:11px;height:11px;"></div>
<div class="btn" style="left:137px;top:413px;width:11px;height:11px;"></div>
<div class="btn" style="left:541px;top:413px;width:11px;height:11px;"></div>
<div class="btn" style="left:552px;top:413px;width:11px;height:11px;"></div>
<div class="btn" style="left:563px;top:413px;width:11px;height:11px;"></div>
<svg class="abs" style="left:104px;top:413px;" width="470" height="11" viewBox="0 0 470 11">
<path d="M7 3 L7 8 L4 5.5 Z" fill="#000"/>
<path d="M15 3 L15 8 L18 5.5 Z" fill="#000"/>
<path d="M29 3 L29 8 L26 5.5 Z" fill="#000"/>
<path d="M441 3 L441 8 L444 5.5 Z" fill="#000"/>
<path d="M455 3 L455 8 L452 5.5 Z" fill="#000"/>
<path d="M463 3 L463 8 L466 5.5 Z" fill="#000"/>
</svg>
</body></html>
